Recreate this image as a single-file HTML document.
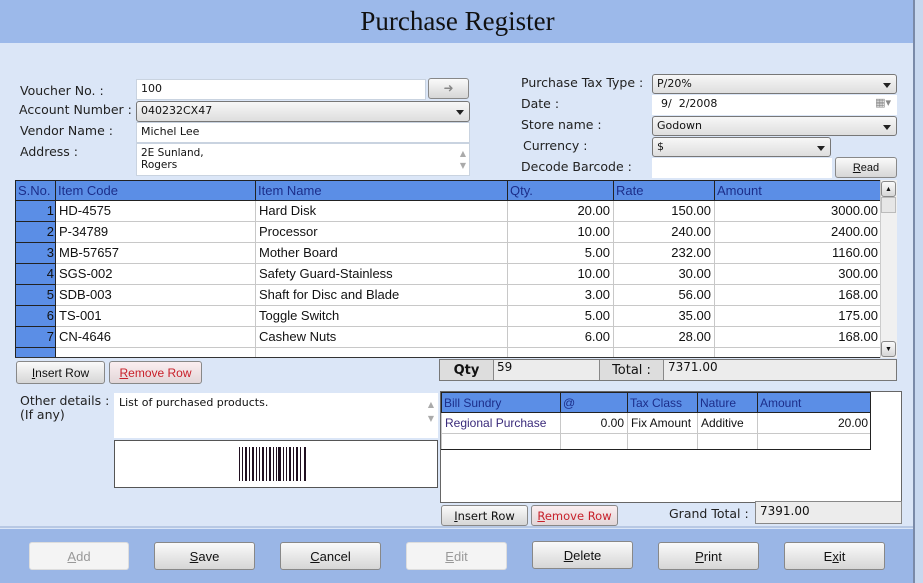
<!DOCTYPE html>
<html><head><meta charset="utf-8"><style>
*{box-sizing:border-box;margin:0;padding:0}
body{width:923px;height:583px;position:relative;overflow:hidden;background:#dbe6f7;font-family:"DejaVu Sans","Liberation Sans",sans-serif;font-size:12px;color:#111}
.a{position:absolute}
.hdr{left:0;top:0;width:923px;height:43px;background:#9cb9ea}
.title{left:0;top:6px;width:915px;text-align:center;font-family:"Liberation Serif",serif;font-size:27px;color:#111}
.lbl{font-size:12.5px;color:#222}
.tb{background:#fff;border:1px solid #c9d3e0;font-size:11px;padding:2px 4px}
.cb{background:linear-gradient(#f7f7f7,#dedede);border:1px solid #777;border-radius:3px;font-size:11px;padding:2px 4px}
.cb:after{content:"";position:absolute;right:5px;top:8px;border:4px solid transparent;border-top:5px solid #222}
.btn{background:linear-gradient(#fafafa,#d6d6d6);border:1px solid #888;border-radius:3px;text-align:center;font-family:"Liberation Sans",sans-serif;font-size:12px}
.grid{border-collapse:collapse;font-family:"Liberation Sans",sans-serif;font-size:13px;table-layout:fixed}
.grid td{height:21px;border:1px solid #c8c8c8;padding:0 3px;white-space:nowrap;overflow:hidden;background:#fff;line-height:18px}
.grid th{height:20px;background:#5b8ee6;color:#1c2e8a;font-weight:normal;text-align:left;border:1px solid #222;padding:0 2px;line-height:18px}
.grid td.n{background:#5b8ee6;text-align:right;border-color:#222;padding:0 1px}
.r{text-align:right}
.bb{height:28px;top:542px;line-height:27px;font-size:13px}
</style></head><body>
<div class="a hdr"></div>
<div class="a title">Purchase Register</div>
<div class="a" style="left:913px;top:0;width:2px;height:583px;background:#7a8aa8"></div>
<div class="a" style="left:915px;top:0;width:8px;height:583px;background:#c8d8ef"></div>

<div class="a lbl" style="left:20px;top:83px">Voucher No. :</div>
<div class="a lbl" style="left:19px;top:102px">Account Number :</div>
<div class="a lbl" style="left:20px;top:123px">Vendor Name :</div>
<div class="a lbl" style="left:20px;top:144px">Address :</div>
<div class="a tb" style="left:136px;top:79px;width:290px;height:21px">100</div>
<div class="a btn" style="left:428px;top:78px;width:41px;height:21px;color:#888;line-height:18px">&#10140;</div>
<div class="a cb" style="left:136px;top:101px;width:334px;height:21px">040232CX47</div>
<div class="a tb" style="left:136px;top:122px;width:334px;height:21px">Michel Lee</div>
<div class="a tb" style="left:136px;top:143px;width:334px;height:33px;font-size:10.5px;line-height:12px;padding-top:3px">2E Sunland,<br>Rogers<span class="a" style="right:3px;top:4px;color:#aaa;font-size:8px">&#9650;<br>&#9660;</span></div>

<div class="a lbl" style="left:521px;top:75px">Purchase Tax Type :</div>
<div class="a lbl" style="left:521px;top:96px">Date :</div>
<div class="a lbl" style="left:521px;top:117px">Store name :</div>
<div class="a lbl" style="left:523px;top:138px">Currency :</div>
<div class="a lbl" style="left:521px;top:159px">Decode Barcode :</div>
<div class="a cb" style="left:652px;top:74px;width:245px;height:20px">P/20%</div>
<div class="a tb" style="left:652px;top:95px;width:245px;height:20px;border:none;padding-left:9px">9/&nbsp; 2/2008<span class="a" style="right:6px;top:1px;color:#888">&#9638;&#9662;</span></div>
<div class="a cb" style="left:652px;top:116px;width:245px;height:20px">Godown</div>
<div class="a cb" style="left:652px;top:137px;width:179px;height:20px">$</div>
<div class="a tb" style="left:652px;top:158px;width:180px;height:20px;border:none"></div>
<div class="a btn" style="left:835px;top:157px;width:62px;height:21px;line-height:20px;font-size:11px"><u>R</u>ead</div>

<div class="a" style="left:15px;top:180px;width:866px;height:178px;overflow:hidden">
<table class="grid" style="width:866px">
<colgroup><col style="width:40px"><col style="width:200px"><col style="width:252px"><col style="width:106px"><col style="width:101px"><col style="width:167px"></colgroup>
<tr><th>S.No.</th><th>Item Code</th><th>Item Name</th><th>Qty.</th><th>Rate</th><th>Amount</th></tr>
<tr><td class="n">1</td><td>HD-4575</td><td>Hard Disk</td><td class="r">20.00</td><td class="r">150.00</td><td class="r">3000.00</td></tr>
<tr><td class="n">2</td><td>P-34789</td><td>Processor</td><td class="r">10.00</td><td class="r">240.00</td><td class="r">2400.00</td></tr>
<tr><td class="n">3</td><td>MB-57657</td><td>Mother Board</td><td class="r">5.00</td><td class="r">232.00</td><td class="r">1160.00</td></tr>
<tr><td class="n">4</td><td>SGS-002</td><td>Safety Guard-Stainless</td><td class="r">10.00</td><td class="r">30.00</td><td class="r">300.00</td></tr>
<tr><td class="n">5</td><td>SDB-003</td><td>Shaft for Disc and Blade</td><td class="r">3.00</td><td class="r">56.00</td><td class="r">168.00</td></tr>
<tr><td class="n">6</td><td>TS-001</td><td>Toggle Switch</td><td class="r">5.00</td><td class="r">35.00</td><td class="r">175.00</td></tr>
<tr><td class="n">7</td><td>CN-4646</td><td>Cashew Nuts</td><td class="r">6.00</td><td class="r">28.00</td><td class="r">168.00</td></tr>
<tr><td class="n"></td><td></td><td></td><td></td><td></td><td></td></tr>
</table></div>
<div class="a" style="left:15px;top:357px;width:882px;height:1px;background:#333"></div>
<div class="a" style="left:880px;top:180px;width:17px;height:178px;background:#f0f0f0;border-left:1px solid #ccc"></div>
<div class="a btn" style="left:881px;top:181px;width:15px;height:16px;font-size:7px;line-height:15px">&#9650;</div>
<div class="a" style="left:881px;top:197px;width:15px;height:16px;background:#e6e6e6;border:1px solid #bbb"></div>
<div class="a btn" style="left:881px;top:341px;width:15px;height:16px;font-size:7px;line-height:15px">&#9660;</div>

<div class="a btn" style="left:16px;top:361px;width:89px;height:23px;line-height:22px"><u>I</u>nsert Row</div>
<div class="a btn" style="left:109px;top:361px;width:93px;height:23px;line-height:22px;color:#c8202a;background:linear-gradient(#fbeef0,#e2d6d8)"><u>R</u>emove Row</div>

<div class="a" style="left:439px;top:359px;width:458px;height:22px;background:#ececec;border:1px solid #777"></div>
<div class="a" style="left:440px;top:360px;width:53px;height:20px;background:#ddd;font-weight:bold;font-size:13px;text-align:center;line-height:21px">Qty</div>
<div class="a" style="left:493px;top:360px;width:1px;height:20px;background:#888"></div>
<div class="a" style="left:497px;top:360px;font-size:12px">59</div>
<div class="a" style="left:599px;top:360px;width:65px;height:20px;background:#ddd;border-left:1px solid #888;border-right:1px solid #888;font-size:13px;text-align:center;line-height:21px">Total :</div>
<div class="a" style="left:668px;top:360px;font-size:12px">7371.00</div>

<div class="a lbl" style="left:20px;top:394px;line-height:14px">Other details :<br>(If any)</div>
<div class="a tb" style="left:114px;top:393px;width:324px;height:45px;border:none;font-size:11px;padding:3px 5px">List of purchased products.<span class="a" style="right:4px;top:5px;color:#aaa;font-size:8px;line-height:14px">&#9650;<br>&#9660;</span></div>
<div class="a" style="left:114px;top:440px;width:324px;height:48px;background:#fff;border:1px solid #555">
<svg class="a" style="left:123px;top:6px" width="70" height="34"><g fill="#201020">
<rect x="1" y="0" width="1" height="34"/><rect x="4" y="0" width="1" height="34"/><rect x="7" y="0" width="2" height="34"/><rect x="11" y="0" width="1" height="34"/><rect x="14" y="0" width="2" height="34"/><rect x="18" y="0" width="1" height="34"/><rect x="21" y="0" width="1" height="34"/><rect x="24" y="0" width="2" height="34"/><rect x="28" y="0" width="1" height="34"/><rect x="31" y="0" width="2" height="34"/><rect x="35" y="0" width="1" height="34"/><rect x="38" y="0" width="1" height="34"/><rect x="40" y="0" width="3" height="34"/><rect x="45" y="0" width="1" height="34"/><rect x="48" y="0" width="1" height="34"/><rect x="51" y="0" width="2" height="34"/><rect x="55" y="0" width="1" height="34"/><rect x="58" y="0" width="2" height="34"/><rect x="62" y="0" width="1" height="34"/><rect x="66" y="0" width="2" height="34"/></g></svg></div>

<div class="a" style="left:440px;top:391px;width:462px;height:112px;background:#fff;border:1px solid #666"></div>
<div class="a" style="left:441px;top:392px;width:430px;height:58px;overflow:hidden;border-bottom:1px solid #222;border-right:1px solid #222">
<table class="grid" style="width:430px;font-size:12px">
<colgroup><col style="width:119px"><col style="width:67px"><col style="width:70px"><col style="width:60px"><col style="width:114px"></colgroup>
<tr><th style="height:19px;line-height:16px">Bill Sundry</th><th style="line-height:16px">@</th><th style="line-height:16px">Tax Class</th><th style="line-height:16px">Nature</th><th style="line-height:16px">Amount</th></tr>
<tr><td style="height:19px;line-height:16px;color:#3a2a7a">Regional Purchase</td><td class="r" style="line-height:16px">0.00</td><td style="line-height:16px">Fix Amount</td><td style="line-height:16px">Additive</td><td class="r" style="line-height:16px">20.00</td></tr>
<tr><td style="height:19px"></td><td></td><td></td><td></td><td></td></tr>
</table></div>

<div class="a btn" style="left:441px;top:505px;width:87px;height:21px;line-height:20px;font-size:11.5px;font-family:'DejaVu Sans',sans-serif"><u>I</u>nsert Row</div>
<div class="a btn" style="left:531px;top:505px;width:87px;height:21px;line-height:20px;font-size:11.5px;color:#c8202a;font-family:'DejaVu Sans',sans-serif;background:linear-gradient(#fbeef0,#e2d6d8)"><u>R</u>emove Row</div>
<div class="a lbl" style="left:669px;top:506px">Grand Total :</div>
<div class="a" style="left:755px;top:501px;width:147px;height:23px;background:#ececec;border:1px solid #888;font-size:12px;padding:2px 4px">7391.00</div>

<div class="a" style="left:0;top:526px;width:913px;height:2px;background:#b7c8e4"></div>
<div class="a" style="left:0;top:529px;width:913px;height:54px;background:#9ab6e6"></div>
<div class="a btn bb" style="left:29px;width:100px;background:#f4f4f4;border-color:#ddd;color:#999"><u>A</u>dd</div>
<div class="a btn bb" style="left:154px;width:101px"><u>S</u>ave</div>
<div class="a btn bb" style="left:280px;width:101px"><u>C</u>ancel</div>
<div class="a btn bb" style="left:406px;width:101px;background:#f4f4f4;border-color:#ddd;color:#999"><u>E</u>dit</div>
<div class="a btn bb" style="left:532px;width:101px;top:541px"><u>D</u>elete</div>
<div class="a btn bb" style="left:658px;width:101px"><u>P</u>rint</div>
<div class="a btn bb" style="left:784px;width:101px">E<u>x</u>it</div>
</body></html>
